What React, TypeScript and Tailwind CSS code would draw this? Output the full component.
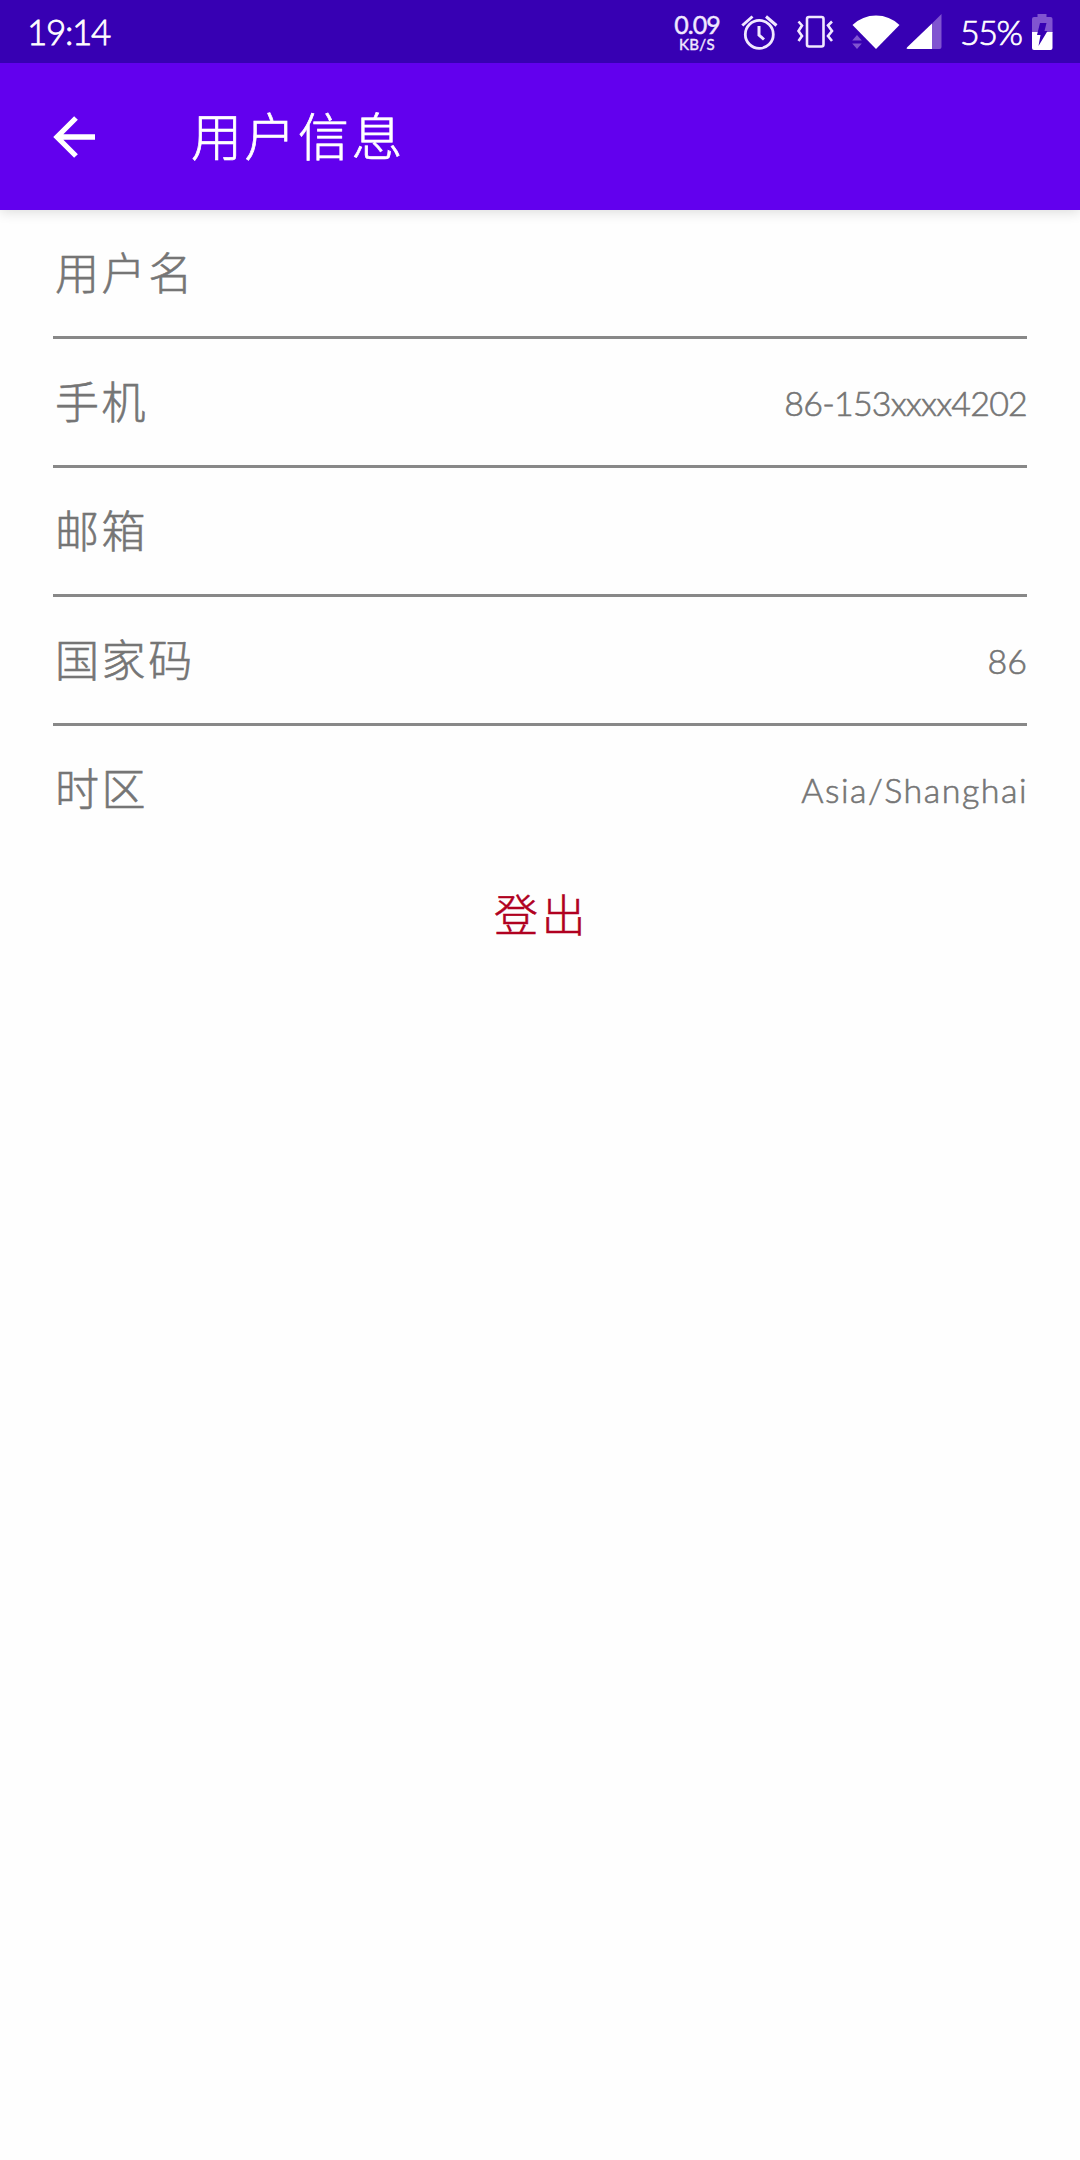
import React from "react";

const rows = [
  { label: "用户名", value: "", valueClass: "" },
  { label: "手机", value: "86-153xxxx4202", valueClass: "tracking-[-0.8px]" },
  { label: "邮箱", value: "", valueClass: "" },
  { label: "国家码", value: "86", valueClass: "" },
  { label: "时区", value: "Asia/Shanghai", valueClass: "-mr-px tracking-[1.5px]" },
];

function AlarmIcon() {
  return (
    <svg className="ml-[19px] h-[38px] w-[38px]" viewBox="0 0 38 38" fill="none" stroke="#f1e8ff" strokeWidth="2.8">
      <circle cx="19.3" cy="21.4" r="14" />
      <path d="M19 13v9l5 4.500M2.300 12.500 12.500 3.500M26 3.500 36.500 12.500" strokeWidth="3" />
    </svg>
  );
}

function VibrateIcon() {
  return (
    <svg className="ml-[18px] h-[38px] w-[38px]" viewBox="0 0 38 38" fill="none" stroke="#f1e8ff" strokeWidth="2.6">
      <rect x="11" y="4" width="16.500" height="29.500" rx="2" />
      <path d="M2.500 8.500 6 12.500 2.500 18 6 23 2.500 28M36 8.500 32 12.500 36 18 32 23 36 28" />
    </svg>
  );
}

function WifiIcon() {
  return (
    <svg className="ml-[18px] h-[38px] w-12" viewBox="0 0 48 38">
      <path d="M.5 12Q10.500 2.500 24 2.500T47.500 12L24 36Z" fill="#fff" />
      <path d="M.2 27.500 5 22l4.800 5.500ZM.2 30.500h9.600L5 36Z" fill="#8054d0" />
    </svg>
  );
}

function SignalIcon() {
  return (
    <svg className="ml-[6px] h-[38px] w-9" viewBox="0 0 36 38">
      <path d="M35.500 1v33q0 2-2 2H26V10.500Z" fill="#8054d0" />
      <path d="M26 10.500V36H2q-2.500 0-.8-1.800Z" fill="#fff" />
    </svg>
  );
}

function BatteryIcon() {
  return (
    <svg className="ml-3 h-[38px] w-[21px]" viewBox="0 0 21 38">
      <path d="M0 20V6q0-2 2-2h3.500V1h9v3H18.500q2 0 2 2v14Z" fill="#8054d0" />
      <path d="M0 19h20.500v16q0 2-2 2H2q-2 0-2-2Z" fill="#fff" />
      <path d="M8 10h6.500l-2 8h3L6.500 33l2-11h-3.500Z" fill="#3700b3" />
    </svg>
  );
}

export default function App() {
  return (
    <main className="flex min-h-[2160px] w-[1080px] flex-col bg-[#fefefe] font-['Lato','Noto_Sans_CJK_SC',sans-serif] font-light">
      <header className="relative shadow-[0_2px_12px_rgba(0,0,0,0.14)]">
        <div className="flex h-[63px] items-center bg-[#3700b3] pl-[27px] text-white">
          <time className="w-[200px] text-[35px] leading-none tracking-[-1.3px] [-webkit-text-stroke:0.8px]">19:14</time>
          <div className="ml-[446px] flex w-[48px] flex-col items-center font-normal text-[#f1e8ff] [-webkit-text-stroke:0.4px]">
            <span className="text-[25px] leading-[25px] tracking-[-1px]">0.09</span>
            <span className="text-[15px] leading-[14px] tracking-[0.4px]">KB/S</span>
          </div>
          <AlarmIcon />
          <VibrateIcon />
          <WifiIcon />
          <SignalIcon />
          <span className="ml-[18px] w-[60px] whitespace-nowrap text-[34px] leading-none tracking-[-1.5px] [-webkit-text-stroke:0.7px]">
            55%
          </span>
          <BatteryIcon />
        </div>
        <div className="flex h-[147px] items-center bg-[#6200ee] pl-[53px] text-white">
          <svg className="h-[42px] w-[42px]" viewBox="0 0 42 42" fill="none" stroke="#fff" strokeWidth="5.300">
            <path d="M42 21H4M23 2 4 21l19 19" />
          </svg>
          <h1 className="ml-[96px] text-[51px] leading-none tracking-[2.5px] [-webkit-text-stroke:0.7px]">用户信息</h1>
        </div>
      </header>

      <section className="px-[53px]">
        {rows.map((row) => (
          <div
            key={row.label}
            className="flex h-[129px] items-center justify-between border-b-[3px] border-[#888] text-[#757575] last:h-[126px] last:border-b-0"
          >
            <span className="pl-0.5 text-[44px] leading-none tracking-[2.6px] [-webkit-text-stroke:0.6px]">{row.label}</span>
            <span className={`pt-0.5 text-[34px] leading-none [-webkit-text-stroke:0.6px] ${row.valueClass}`}>{row.value}</span>
          </div>
        ))}
      </section>

      <button className="flex h-[126px] items-center justify-center pl-[3px] text-[44px] leading-none tracking-[3.5px] text-[#b00020] [-webkit-text-stroke:0.5px]">
        登出
      </button>
    </main>
  );
}
